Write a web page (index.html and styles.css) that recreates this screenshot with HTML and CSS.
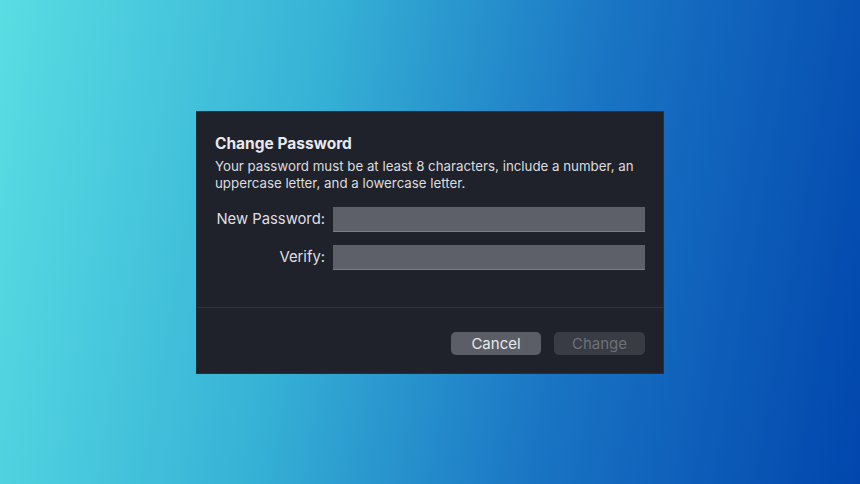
FILE: index.html
```html
<!DOCTYPE html>
<html>
<head>
<meta charset="utf-8">
<link rel="stylesheet" href="styles.css">
</head>
<body>
<div class="dialog">
  <div class="main">
    <div class="title">Change Password</div>
    <div class="desc">Your password must be at least 8 characters, include a number, an uppercase letter, and a lowercase letter.</div>
    <div class="form">
      <div class="row"><label class="label">New Password:</label><div class="input"></div></div>
      <div class="row"><label class="label">Verify:</label><div class="input"></div></div>
    </div>
  </div>
  <div class="footer">
    <div class="btn cancel">Cancel</div>
    <div class="btn change">Change</div>
  </div>
</div>
</body>
</html>
```

FILE: styles.css
```css
html, body { margin: 0; height: 100%; }
body {
  width: 860px; height: 484px;
  background: linear-gradient(100deg, #5adde3 0%, #36b2d6 35%, #1a75c4 65%, #0146ad 100%);
  display: flex; align-items: center; justify-content: center;
  font-family: Inter, "Liberation Sans", sans-serif;
}
.dialog {
  width: 468px; height: 263px;
  background: #1f222b;
  box-sizing: border-box;
  border: 1px solid #2a2e38;
  display: flex; flex-direction: column;
}
.main {
  height: 196px; box-sizing: border-box;
  padding: 22px 18px 0 18px;
  border-bottom: 1px solid #25364a;
}
.title { color: #e9e9eb; font-weight: 700; font-size: 15.5px; line-height: 19px; }
.desc { color: #dcdcdf; font-size: 13.3px; line-height: 17px; margin-top: 5px; }
.form { margin-top: 15px; display: flex; flex-direction: column; gap: 13px; }
.row { display: flex; align-items: center; gap: 8px; }
.label { width: 110px; text-align: right; color: #dfdfe2; font-size: 14.8px; white-space: nowrap; }
.input {
  flex: 1; height: 24px; background: #5d6068;
  border-bottom: 1px solid #7a7d84;
}
.footer {
  flex: 1; display: flex; justify-content: flex-end; align-items: flex-end;
  gap: 13px; padding: 0 18px 18px 0;
}
.btn {
  width: 90px; height: 23px; border-radius: 5px;
  font-size: 15px; line-height: 23px; text-align: center;
}
.cancel { background: #5b5e66; color: #e8e8ea; }
.change { width: 91px; background: #393c44; color: #6e7178; }
```
